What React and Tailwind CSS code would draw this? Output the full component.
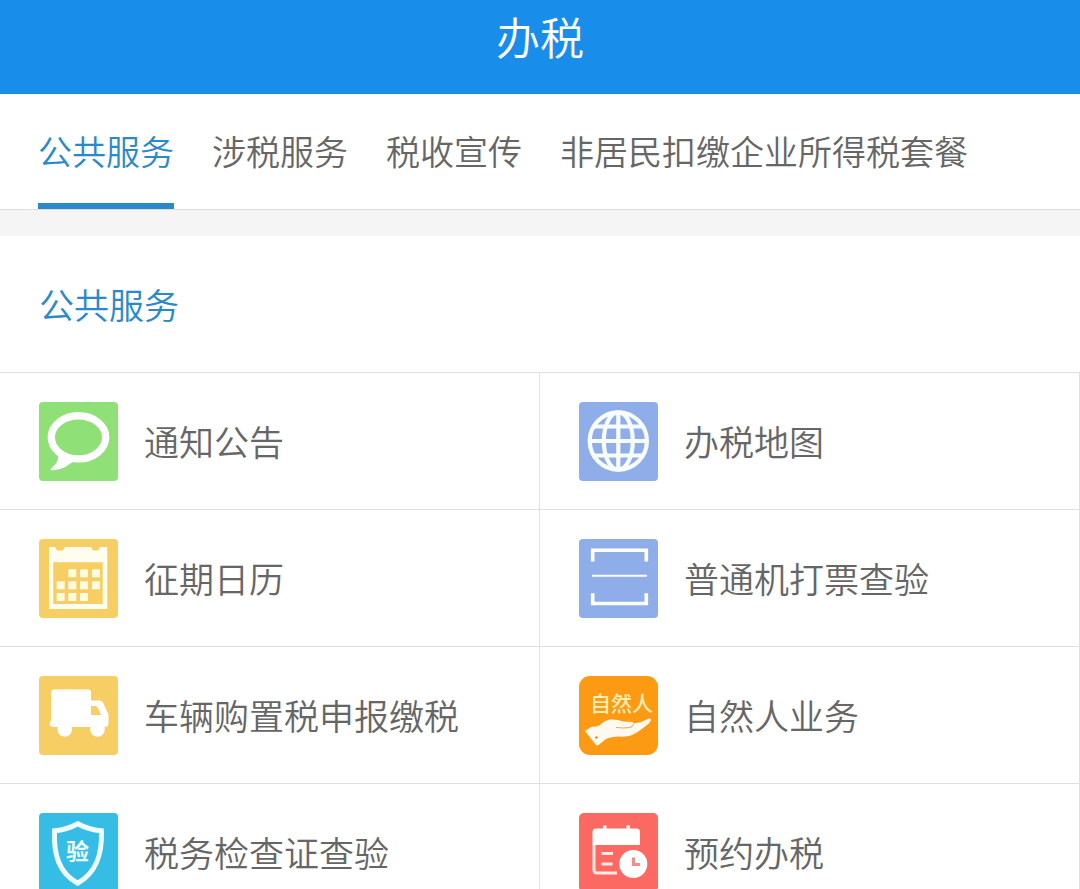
import { useState } from "react";

const tabs = ["公共服务", "涉税服务", "税收宣传", "非居民扣缴企业所得税套餐"];

function Tile({ color, radius = 4, children }) {
  return (
    <svg viewBox="0 0 79 79" className="size-[79px] shrink-0" aria-hidden="true">
      <rect width="79" height="79" rx={radius} fill={color} />
      {children}
    </svg>
  );
}

function NoticeIcon() {
  return (
    <Tile color="#8fe077">
      <ellipse cx="39.5" cy="35.3" rx="27.2" ry="21.6" fill="none" stroke="#fff" strokeWidth="7.4" />
      <path d="M19 51c1 6-1 11-7 15.500c-1 1.500 0 2 2 1.800c9-.8 14-4 20-8.500l2-4z" fill="#fff" />
    </Tile>
  );
}

function GlobeIcon() {
  return (
    <Tile color="#8faee9">
      <g fill="none" stroke="#f8fcff" strokeWidth="4.2">
        <circle cx="39.3" cy="39" r="28.6" />
        <ellipse cx="39.3" cy="39" rx="14.5" ry="28.6" />
        <path d="M39.3 10v58M14.5 24.5h49.6M10.500 39h57.600M14.500 53.500h49.600" />
      </g>
    </Tile>
  );
}

function CalendarIcon() {
  const cells = [
    [29.3, 30.3], [41, 30.3], [53, 30.3],
    [17.7, 42.3], [29.3, 42.3], [41, 42.3], [53, 42.3],
    [17.7, 54], [29.3, 54], [41, 54],
  ];
  return (
    <Tile color="#f6ce63">
      <path
        d="M10 8h6l2 3.500h6l2-3.500h26l2 3.500h5l2-3.500h7.300v62H10zM14.300 23.300v41.700h49.400v-41.700z"
        fill="#fffdf0"
        fillRule="evenodd"
      />
      {cells.map(([x, y]) => (
        <rect key={`${x}-${y}`} x={x} y={y} width="8" height="8" fill="#fffae0" />
      ))}
    </Tile>
  );
}

function ScanIcon() {
  return (
    <Tile color="#8faee9">
      <path d="M13.700 22.500V11.300h53.600v11.200M13.700 54.300v10.200h53.600V54.300" fill="none" stroke="#fff" strokeWidth="3.6" />
      <path d="M13 36.700h55" stroke="#fff" strokeWidth="2" />
    </Tile>
  );
}

function TruckIcon() {
  return (
    <Tile color="#f6ce63">
      <path
        d="M15 13.500h34q3 0 3 3v8h8q3 0 4.500 3l3.500 8q1.500 2 1.500 4v8q0 3.500-4 3.500H15q-4.500 0-4.500-3.500q0-1.500 1.500-2.500V16.500q0-3 3-3zM52 30v9h10l-3-7q-1-2-3-2z"
        fill="#fff"
        fillRule="evenodd"
      />
      <circle cx="25.700" cy="53.500" r="7.300" fill="#fff" />
      <circle cx="58.500" cy="53.500" r="7.300" fill="#fff" />
    </Tile>
  );
}

function PersonIcon() {
  return (
    <Tile color="#fd9a14" radius={11}>
      <text x="11" y="35" fontSize="21" fontWeight="500" fill="#ffeeb4">
        自然人
      </text>
      <path
        d="M6 55q4-3 7-4.500q4 1 8-1.500q5-5 10-5.500q7-.5 13 2l9 .5q2 .5 2 1.500q8-1 15-5q2-.5 2 1.500q-1 3-6 6.500q-7 6-14 9q-5 1.500-12 1q-8 0-13 2.500q-4 3-8 6.500l-2-.5z"
        fill="#fffaf0"
      />
      <path d="M37 51.500q8 1 14 0q3-1 4-4" fill="none" stroke="#eba658" strokeWidth="1" />
      <circle cx="17.500" cy="61.500" r="1.200" fill="#c98730" />
    </Tile>
  );
}

function ShieldIcon() {
  return (
    <Tile color="#35bde6">
      <path
        d="M38.700 10.700q11 6 23.700 7c1 24-5 42-23.700 52.500C20 60 14.500 42 15.500 17.700q12.500-1 23.200-7z"
        fill="none"
        stroke="#f0fdff"
        strokeWidth="5"
      />
      <text x="27" y="46.500" fontSize="23" fontWeight="700" fill="#f0fdff">
        验
      </text>
    </Tile>
  );
}

function BookingIcon() {
  return (
    <Tile color="#fc6962" radius={5}>
      <path d="M13.500 32V19q0-3.500 3.500-3.500h7V12.500h3.500v3h20V12.500H51v3h6.500q3.500 0 3.500 3.500v13z" fill="#fff" />
      <path d="M15 31v26q0 3 3 3h20" fill="none" stroke="#ffe9e7" strokeWidth="3" />
      <path d="M22.500 40.500h11.500M22.500 51h11" stroke="#ffe9e7" strokeWidth="3" />
      <circle cx="54.300" cy="51" r="14" fill="#fff" />
      <path d="M54.500 44.500v7h6.500" fill="none" stroke="#f08f89" strokeWidth="3" />
    </Tile>
  );
}

const services = [
  { name: "通知公告", Icon: NoticeIcon },
  { name: "办税地图", Icon: GlobeIcon },
  { name: "征期日历", Icon: CalendarIcon },
  { name: "普通机打票查验", Icon: ScanIcon },
  { name: "车辆购置税申报缴税", Icon: TruckIcon },
  { name: "自然人业务", Icon: PersonIcon },
  { name: "税务检查证查验", Icon: ShieldIcon },
  { name: "预约办税", Icon: BookingIcon },
];

export default function App() {
  const [active, setActive] = useState(0);

  return (
    <div className="min-h-screen bg-white font-['Noto_Sans_CJK_SC',sans-serif] font-[350] text-[#666]">
      <header className="bg-[#188eea] pt-1 pb-[26px] text-center">
        <h1 className="text-[44px] leading-[64px] font-[350] text-white">办税</h1>
      </header>

      <nav className="flex gap-[38px] border-b border-[#dcdcdf] px-[38px]">
        {tabs.map((tab, i) => (
          <button
            key={tab}
            type="button"
            onClick={() => setActive(i)}
            className={
              i === active
                ? "cursor-pointer border-b-6 border-[#2a89ca] pt-[33px] pb-7 text-[34px] leading-[48px] whitespace-nowrap text-[#2a89ca]"
                : "cursor-pointer border-b-6 border-transparent pt-[33px] pb-7 text-[34px] leading-[48px] whitespace-nowrap"
            }
          >
            {tab}
          </button>
        ))}
      </nav>

      <main className="border-t-26 border-[#f5f5f5]">
        <h2 className="px-[39px] py-11 text-[35px] leading-[48px] font-[350] text-[#2a89ca]">公共服务</h2>

        {/* Service grid */}
        <ul className="grid grid-cols-2">
          {services.map(({ name, Icon }) => (
            <li key={name} className="border-t border-r border-[#e0e0e0]">
              <a href="#" className="flex items-center gap-[26px] pt-[29px] pb-7 pl-[39px]">
                <Icon />
                <span className="pb-0.5 text-[35px] leading-[48px] whitespace-nowrap">{name}</span>
              </a>
            </li>
          ))}
        </ul>
      </main>
    </div>
  );
}
